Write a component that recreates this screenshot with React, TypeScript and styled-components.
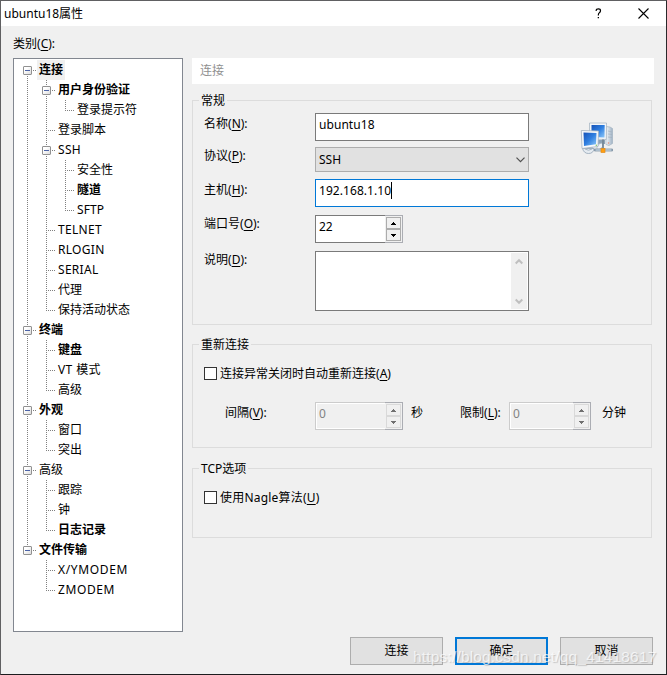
import React from 'react';
import styled, { createGlobalStyle, css } from 'styled-components';

const GlobalStyle = createGlobalStyle`
  *, *::before, *::after { box-sizing: border-box; }
  body {
    margin: 0;
    overflow: hidden;
    font-family: "Noto Sans", "Noto Sans CJK SC", sans-serif;
    font-size: 12px;
    line-height: 16px;
    color: #000;
  }
`;

const Window = styled.div`
  position: relative;
  width: 667px;
  height: 675px;
  display: flex;
  flex-direction: column;
  background: #f0f0f0;
  border: 1px solid #606062;
  border-right-color: #29292b;
  border-bottom-color: #1c1c1e;
`;

const TitleBar = styled.header`
  height: 25px;
  flex: none;
  display: flex;
  align-items: center;
  background: #fff;
  padding-left: 3px;
`;

const Title = styled.h1`
  flex: 1;
  margin: 0;
  font-size: 12px;
  font-weight: 400;
  line-height: 16px;
`;

const CaptionButton = styled.button`
  width: 45px;
  height: 25px;
  padding: 0;
  border: 0;
  background: none;
  display: flex;
  align-items: center;
  justify-content: center;
`;

const CategoryLabel = styled.div`
  padding: 10px 0 0 12px;
  height: 32px;
  flex: none;
`;

const Mnemonic = styled.span`
  text-decoration: underline;
  text-decoration-thickness: 1px;
  text-underline-offset: 2px;
`;

const Body = styled.div`
  display: flex;
  height: 574px;
  flex: none;
  padding: 0 12px;
  gap: 9px;
`;

const Tree = styled.div`
  width: 170px;
  flex: none;
  padding: 1px 0 0 4px;
  background: #fff;
  border: 1px solid #828790;
`;

const TreeRow = styled.div`
  display: flex;
  height: 20px;
`;

const dotsDown = 'repeating-linear-gradient(to bottom, #808080 0 1px, transparent 1px 2px)';
const dotsAcross = 'repeating-linear-gradient(to right, #808080 0 1px, transparent 1px 2px)';

type Guide = 'blank' | 'line' | 'tee' | 'end' | 'start';

const GuideCell = styled.div<{ $kind: Guide }>`
  width: 19px;
  height: 20px;
  flex: none;
  padding: 6px 0 0 5px;
  background-repeat: no-repeat;
  ${({ $kind }) => $kind === 'line' && css`
    background-image: ${dotsDown};
    background-position: 9px 0;
    background-size: 1px 20px;
  `}
  ${({ $kind }) => $kind === 'tee' && css`
    background-image: ${dotsDown}, ${dotsAcross};
    background-position: 9px 0, 9px 10px;
    background-size: 1px 20px, 9px 1px;
  `}
  ${({ $kind }) => $kind === 'end' && css`
    background-image: ${dotsDown}, ${dotsAcross};
    background-position: 9px 0, 9px 10px;
    background-size: 1px 11px, 9px 1px;
  `}
  ${({ $kind }) => $kind === 'start' && css`
    background-image: ${dotsDown}, ${dotsAcross};
    background-position: 9px 10px, 9px 10px;
    background-size: 1px 10px, 9px 1px;
  `}
`;

const Toggle = styled.div`
  width: 9px;
  height: 9px;
  padding: 3px 1px;
  border: 1px solid #919191;
  border-radius: 1px;
  background: linear-gradient(135deg, #fff 30%, #dcdcdc);
  &::before {
    content: "";
    display: block;
    height: 1px;
    background: #4b63a7;
  }
`;

const TreeLabel = styled.div<{ $bold?: boolean; $active?: boolean; $tracking?: number }>`
  padding: 2px 2px 0;
  white-space: nowrap;
  font-weight: ${({ $bold }) => ($bold ? 700 : 400)};
  letter-spacing: ${({ $tracking = 0 }) => $tracking}px;
  background: ${({ $active }) => ($active ? '#f0f0f0' : 'transparent')};
`;

const Page = styled.main`
  width: 462px;
  flex: none;
`;

const PageHeader = styled.div`
  height: 26px;
  padding: 5px 8px;
  background: #fff;
  color: #909090;
`;

const Group = styled.section<{ $top: number; $height: number }>`
  width: 460px;
  height: ${({ $height }) => $height}px;
  margin-top: ${({ $top }) => $top}px;
  border: 1px solid #dcdcdc;
  padding-left: 11px;
`;

const Legend = styled.h2`
  width: max-content;
  height: 16px;
  margin: -8px 0 0 -5px;
  padding: 0 2px;
  font-size: 12px;
  font-weight: 400;
  line-height: 16px;
  background: #f0f0f0;
`;

const GeneralContent = styled.div`
  display: flex;
`;

const Fields = styled.div`
  width: 325px;
  flex: none;
  padding-top: 4px;
`;

const FieldRow = styled.div<{ $height: number }>`
  display: flex;
  height: ${({ $height }) => $height}px;
`;

const FieldLabel = styled.label<{ $drop?: number }>`
  width: 111px;
  flex: none;
  padding-top: ${({ $drop = 3 }) => $drop}px;
`;

const TextBox = styled.div<{ $focus?: boolean }>`
  width: 214px;
  height: 28px;
  padding: 3px;
  display: flex;
  letter-spacing: 0.06px;
  background: #fff;
  border: 1px solid ${({ $focus }) => ($focus ? '#0078d7' : '#7a7a7a')};
`;

const Caret = styled.span`
  width: 1px;
  height: 17px;
  margin-top: -1px;
  background: #000;
`;

const Combo = styled.div`
  width: 214px;
  height: 25px;
  padding: 0 3px;
  display: flex;
  align-items: center;
  justify-content: space-between;
  background: #e1e1e1;
  border: 1px solid #adadad;
`;

const SpinBox = styled.div<{ $width: number; $disabled?: boolean }>`
  width: ${({ $width }) => $width}px;
  height: 28px;
  flex: none;
  display: flex;
  background: ${({ $disabled }) => ($disabled ? '#f0f0f0' : '#fff')};
  color: ${({ $disabled }) => ($disabled ? '#838383' : '#000')};
`;

const SpinValue = styled.div<{ $disabled?: boolean }>`
  flex: 1;
  padding: 3px;
  border: 1px solid ${({ $disabled }) => ($disabled ? '#ccc' : '#7a7a7a')};
  border-right: 0;
  box-shadow: ${({ $disabled }) => ($disabled ? 'inset 1px 1px #fff, inset 0 -1px #fff' : 'none')};
`;

const SpinButtons = styled.div<{ $disabled?: boolean }>`
  width: 18px;
  padding: 1px;
  background: #f0f0f0;
  border: 1px solid #abadb3;
  border-left: 0;
  display: flex;
  flex-direction: column;
  color: ${({ $disabled }) => ($disabled ? '#707070' : '#000')};
`;

const SpinButton = styled.button<{ $disabled?: boolean }>`
  width: 15px;
  height: 12px;
  padding: 0;
  display: flex;
  align-items: center;
  justify-content: center;
  color: inherit;
  background: #f0f0f0;
  border: 1px solid ${({ $disabled }) => ($disabled ? '#d9d9d9' : '#acacac')};
`;

const TextArea = styled.div`
  width: 214px;
  height: 60px;
  padding: 1px;
  display: flex;
  justify-content: flex-end;
  background: #fff;
  border: 1px solid #7a7a7a;
`;

const ScrollTrack = styled.div`
  width: 16px;
  padding: 5px 0 4px;
  display: flex;
  flex-direction: column;
  align-items: center;
  justify-content: space-between;
  background: #f0f0f0;
`;

const IconSlot = styled.div`
  padding: 13px 0 0 51px;
`;

const CheckRow = styled.label<{ $tracking?: number }>`
  display: flex;
  gap: 3px;
  padding-top: 13px;
  letter-spacing: ${({ $tracking = 0 }) => $tracking}px;
`;

const CheckBox = styled.span`
  width: 13px;
  height: 13px;
  margin-top: 1px;
  flex: none;
  background: #fff;
  border: 1px solid #333;
`;

const IntervalRow = styled.div`
  display: flex;
  padding: 20px 0 0 21px;
`;

const InlineLabel = styled.span<{ $width: number; $pad?: number }>`
  width: ${({ $width }) => $width}px;
  flex: none;
  padding: 3px 0 0 ${({ $pad = 0 }) => $pad}px;
  white-space: nowrap;
`;

const Footer = styled.footer`
  display: flex;
  justify-content: flex-end;
  gap: 12px;
  padding: 5px 13px 0 0;
`;

const PushButton = styled.button<{ $primary?: boolean }>`
  width: 93px;
  height: 28px;
  padding: 0;
  font: inherit;
  color: #000;
  background: #e1e1e1;
  border: ${({ $primary }) => ($primary ? '2px solid #0078d7' : '1px solid #adadad')};
`;

const Watermark = styled.div`
  position: absolute;
  left: 412px;
  top: 646px;
  font-family: "Liberation Sans", sans-serif;
  font-size: 15.5px;
  line-height: 20px;
  letter-spacing: 0.17px;
  white-space: nowrap;
  color: rgba(255, 255, 255, 0.72);
  text-shadow: 1px 1px 1px rgba(120, 120, 120, 0.35);
  pointer-events: none;
`;

function Label({ text, hotkey, colon = true }: { text: string; hotkey: string; colon?: boolean }) {
  return <>{text}(<Mnemonic>{hotkey}</Mnemonic>){colon && ':'}</>;
}

type Node = { text: string; bold?: boolean; tracking?: number; children?: Node[] };

const categories: Node[] = [
  { text: '连接', bold: true, children: [
    { text: '用户身份验证', bold: true, children: [{ text: '登录提示符' }] },
    { text: '登录脚本' },
    { text: 'SSH', tracking: 0.3, children: [{ text: '安全性' }, { text: '隧道', bold: true }, { text: 'SFTP', tracking: 0.1 }] },
    { text: 'TELNET', tracking: 0.3 },
    { text: 'RLOGIN', tracking: 0.3 },
    { text: 'SERIAL', tracking: 0.3 },
    { text: '代理' },
    { text: '保持活动状态' },
  ] },
  { text: '终端', bold: true, children: [{ text: '键盘', bold: true }, { text: 'VT 模式', tracking: 0.4 }, { text: '高级' }] },
  { text: '外观', bold: true, children: [{ text: '窗口' }, { text: '突出' }] },
  { text: '高级', children: [{ text: '跟踪' }, { text: '钟' }, { text: '日志记录', bold: true }] },
  { text: '文件传输', bold: true, children: [{ text: 'X/YMODEM', tracking: 0.65 }, { text: 'ZMODEM', tracking: 0.6 }] },
];

function TreeNodes({ nodes, guides = [] }: { nodes: Node[]; guides?: Guide[] }) {
  return <>{nodes.map((node, i) => {
    const last = i === nodes.length - 1;
    const first = i === 0 && guides.length === 0;
    return (
      <React.Fragment key={node.text}>
        <TreeRow>
          {guides.map((g, n) => <GuideCell key={n} $kind={g} />)}
          <GuideCell $kind={first ? 'start' : last ? 'end' : 'tee'}>
            {node.children && <Toggle />}
          </GuideCell>
          <TreeLabel $bold={node.bold} $active={first} $tracking={node.tracking}>{node.text}</TreeLabel>
        </TreeRow>
        {node.children && <TreeNodes nodes={node.children} guides={[...guides, last ? 'blank' : 'line']} />}
      </React.Fragment>
    );
  })}</>;
}

function Spinner({ value, width, disabled }: { value: string; width: number; disabled?: boolean }) {
  return (
    <SpinBox $width={width} $disabled={disabled}>
      <SpinValue $disabled={disabled}>{value}</SpinValue>
      <SpinButtons $disabled={disabled}>
        <SpinButton $disabled={disabled}>
          <svg width="5" height="3" shapeRendering="crispEdges"><path d="M2 0h1v1h1v1h1v1H0V2h1V1h1z" fill="currentColor" /></svg>
        </SpinButton>
        <SpinButton $disabled={disabled}>
          <svg width="5" height="3" shapeRendering="crispEdges"><path d="M0 0h5v1H4v1H3v1H2V2H1V1H0z" fill="currentColor" /></svg>
        </SpinButton>
      </SpinButtons>
    </SpinBox>
  );
}

function NetworkIcon() {
  return (
    <svg width="34" height="34" viewBox="0 0 34 34">
      <defs>
        <linearGradient id="screen" x1="0" y1="0" x2="1" y2="1">
          <stop offset="0" stopColor="#1552b8" />
          <stop offset="0.5" stopColor="#2f7fe0" />
          <stop offset="1" stopColor="#8cc8fa" />
        </linearGradient>
        <linearGradient id="case" x1="0" y1="0" x2="1" y2="0">
          <stop offset="0" stopColor="#f4f7fa" />
          <stop offset="1" stopColor="#9fb2c4" />
        </linearGradient>
      </defs>
      <path d="M26 4.500l4 .5 2.500 1.500v15l-3.500 2-3-1z" fill="url(#case)" stroke="#a3b3c2" strokeWidth=".7" />
      <path d="M28 9l4 1M28 12l4 .5M28 15l4 .5" stroke="#a2b0be" strokeWidth=".7" />
      <circle cx="28.500" cy="21" r=".8" fill="#e38a7a" />
      <path d="M18 18h7v4h-7z" fill="#8da3b7" />
      <path d="M9.500 1L26.500 1L26.300 17.500L9.500 17z" fill="#f3f6f9" stroke="#a9b7c4" strokeWidth=".8" />
      <path d="M11.500 3L24.700 3L24.500 15.500L11.500 15z" fill="url(#screen)" />
      <path d="M17 25l2-3 3-1 1 3-3 3-3 .5z" fill="#eef2f6" stroke="#a9b7c4" strokeWidth=".7" />
      <path d="M7 24h6v4H7z" fill="#b9c9d8" />
      <path d="M2.500 26.500Q4 31.500 8.500 31.500Q13.500 31.500 14 26.500z" fill="#e5ebf1" stroke="#93a4b5" strokeWidth=".8" />
      <path d="M5 27q3.500 2.500 7 0" fill="none" stroke="#a9b7c4" />
      <path d="M1.300 8.500L18.500 9L18 24.500L2 26.500z" fill="#f7f9fb" stroke="#a3b1bf" strokeWidth=".8" />
      <path d="M3.500 10.500L16.500 11L16 22.300L4 24z" fill="url(#screen)" />
      <circle cx="16.300" cy="23.300" r=".7" fill="#78c850" />
      <path d="M23 17.500v9" stroke="#768897" strokeWidth="1.800" />
      <path d="M14.500 27h18v2h-18z" fill="#a8bccd" stroke="#72879a" strokeWidth=".7" />
      <path d="M16 28h15" stroke="#dbe6ef" strokeWidth=".7" />
      <rect x="21" y="26.500" width="4" height="4" fill="#ff9f10" stroke="#e08a1a" strokeWidth=".7" />
    </svg>
  );
}

export default function App() {
  return (
    <>
      <GlobalStyle />
      <Window>
        <TitleBar>
          <Title>ubuntu18属性</Title>
          <CaptionButton aria-label="Help">
            <svg width="7" height="11" viewBox="0 0 7 11"><path d="M1.200 3V2Q1.200 .8 3.400 .8Q5.500 .8 5.500 2.800Q5.500 4 4.300 4.800Q3.300 5.400 3.300 7.500" fill="none" stroke="#000" strokeWidth="1.200" /><path d="M2.700 9h1.300v1.300H2.700z" /></svg>
          </CaptionButton>
          <CaptionButton aria-label="Close">
            <svg width="11" height="11" viewBox="0 0 11 11"><path d="M.5 .5l10 10M10.500 .5l-10 10" stroke="#000" strokeWidth="1.100" /></svg>
          </CaptionButton>
        </TitleBar>
        <CategoryLabel><Label text="类别" hotkey="C" /></CategoryLabel>
        <Body>
          <Tree><TreeNodes nodes={categories} /></Tree>
          <Page>
            <PageHeader>连接</PageHeader>
            <Group $top={16} $height={225}>
              <Legend>常规</Legend>
              <GeneralContent>
                <Fields>
                  <FieldRow $height={34}>
                    <FieldLabel><Label text="名称" hotkey="N" /></FieldLabel>
                    <TextBox>ubuntu18</TextBox>
                  </FieldRow>
                  <FieldRow $height={32}>
                    <FieldLabel $drop={1}><Label text="协议" hotkey="P" /></FieldLabel>
                    <Combo>SSH
                      <svg width="9" height="6" viewBox="0 0 9 6"><path d="M.5 .7l4 4 4-4" fill="none" stroke="#505050" strokeWidth="1.200" /></svg>
                    </Combo>
                  </FieldRow>
                  <FieldRow $height={36}>
                    <FieldLabel><Label text="主机" hotkey="H" /></FieldLabel>
                    <TextBox $focus>192.168.1.10<Caret /></TextBox>
                  </FieldRow>
                  <FieldRow $height={36}>
                    <FieldLabel $drop={1}><Label text="端口号" hotkey="O" /></FieldLabel>
                    <Spinner value="22" width={88} />
                  </FieldRow>
                  <FieldRow $height={60}>
                    <FieldLabel $drop={1}><Label text="说明" hotkey="D" /></FieldLabel>
                    <TextArea>
                      <ScrollTrack>
                        <svg width="8" height="7" viewBox="0 0 8 7"><path d="M.7 5.500L4 2.200l3.300 3.300" fill="none" stroke="#bfbfbf" strokeWidth="2" /></svg>
                        <svg width="8" height="7" viewBox="0 0 8 7"><path d="M.7 1.500L4 4.800l3.300-3.300" fill="none" stroke="#bfbfbf" strokeWidth="2" /></svg>
                      </ScrollTrack>
                    </TextArea>
                  </FieldRow>
                </Fields>
                <IconSlot><NetworkIcon /></IconSlot>
              </GeneralContent>
            </Group>
            <Group $top={19} $height={104}>
              <Legend>重新连接</Legend>
              <CheckRow>
                <CheckBox /><span><Label text="连接异常关闭时自动重新连接" hotkey="A" colon={false} /></span>
              </CheckRow>
              <IntervalRow>
                <InlineLabel $width={90}><Label text="间隔" hotkey="V" /></InlineLabel>
                <Spinner value="0" width={88} disabled />
                <InlineLabel $width={57} $pad={8}>秒</InlineLabel>
                <InlineLabel $width={49}><Label text="限制" hotkey="L" /></InlineLabel>
                <Spinner value="0" width={82} disabled />
                <InlineLabel $width={40} $pad={11}>分钟</InlineLabel>
              </IntervalRow>
            </Group>
            <Group $top={20} $height={70}>
              <Legend>TCP选项</Legend>
              <CheckRow $tracking={0.2}>
                <CheckBox /><span><Label text="使用Nagle算法" hotkey="U" colon={false} /></span>
              </CheckRow>
            </Group>
          </Page>
        </Body>
        <Footer>
          <PushButton>连接</PushButton>
          <PushButton $primary>确定</PushButton>
          <PushButton>取消</PushButton>
        </Footer>
        <Watermark>https://blog.csdn.net/qq_41418617</Watermark>
      </Window>
    </>
  );
}
